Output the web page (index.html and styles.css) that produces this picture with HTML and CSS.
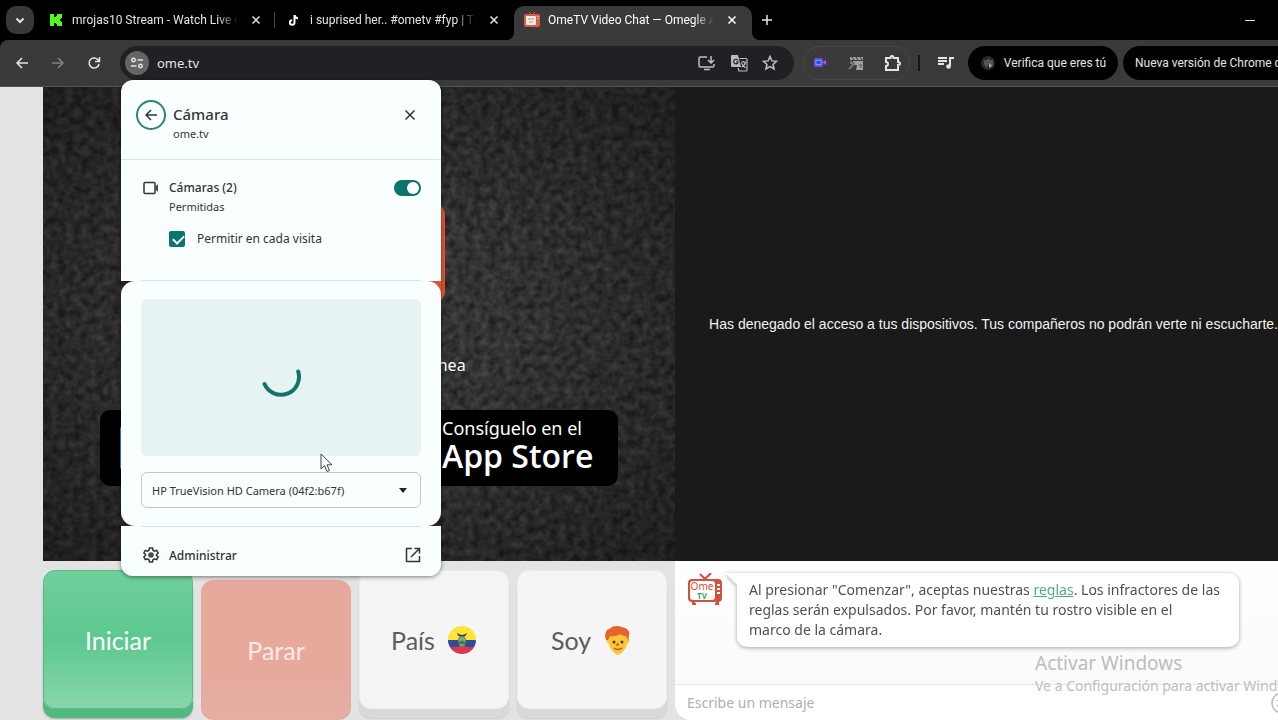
FILE: index.html
```html
<!DOCTYPE html>
<html lang="es">
<head>
    <meta charset="UTF-8">
    <meta name="viewport" content="width=device-width, initial-scale=1.0">
    <title>OmeTV Video Chat — Omegle</title>
    <link rel="stylesheet" href="styles.css">
</head>
<body>
    <header class="browser">
        <div class="tab-strip">
            <button class="tab-search" aria-label="Buscar pestañas">
                <svg width="12" height="12" viewBox="0 0 12 12"><path d="M2.5 4.5 6 8l3.500-3.500" class="line bold"/></svg>
            </button>
            <div class="tab">
                <svg class="favicon" width="14" height="14" viewBox="0 0 14 14"><path fill="#53fc18" d="M1 1h4v3h2V3h1V1h5v4h-1v1h-1v2h1v1h1v4H8v-2H7v-1H5v3H1z"/></svg>
                <span class="tab-title">mrojas10 Stream - Watch Live on Kick</span>
                <button class="tab-close" aria-label="Cerrar"><svg width="10" height="10" viewBox="0 0 10 10"><path d="m1.500 1.500 7 7m0-7-7 7" class="line"/></svg></button>
            </div>
            <div class="tab divided">
                <svg class="favicon" width="14" height="14" viewBox="0 0 14 14"><path d="M7.500 2v7.500a2.300 2.300 0 1 1-2.300-2.300M7.500 2c.3 2 1.500 3 3.500 3.200" fill="none" stroke="#fff" stroke-width="2"/></svg>
                <span class="tab-title">i suprised her.. #ometv #fyp | TikTok</span>
                <button class="tab-close" aria-label="Cerrar"><svg width="10" height="10" viewBox="0 0 10 10"><path d="m1.500 1.500 7 7m0-7-7 7" class="line"/></svg></button>
            </div>
            <div class="tab active">
                <svg class="favicon" width="16" height="16" viewBox="0 0 16 16"><path d="M5 0l3 3 3-3" fill="none" stroke="#dc5a48"/><rect y="2" width="16" height="13" rx="2" fill="#dc5a48"/><rect x="2" y="4" width="10" height="9" rx="1" fill="#f5ece6"/><path d="M4 7h6M5 10h4" stroke="#ba8f72"/><path d="M14 4v4" stroke="#fff" stroke-dasharray="1 1"/></svg>
                <span class="tab-title">OmeTV Video Chat — Omegle Alternative</span>
                <button class="tab-close" aria-label="Cerrar"><svg width="10" height="10" viewBox="0 0 10 10"><path d="m1.500 1.500 7 7m0-7-7 7" class="line"/></svg></button>
            </div>
            <button class="new-tab" aria-label="Nueva pestaña"><svg width="12" height="12" viewBox="0 0 12 12"><path d="M6 1v10M1 6h10" class="line"/></svg></button>
            <button class="minimize" aria-label="Minimizar"><svg width="12" height="12" viewBox="0 0 12 12"><path d="M1 6.500h10" stroke="#ddd"/></svg></button>
        </div>

        <div class="toolbar">
            <nav class="nav-buttons">
                <button aria-label="Atrás"><svg width="14" height="14" viewBox="0 0 14 14"><path d="M13 7H2m5-5L2 7l5 5" class="line"/></svg></button>
                <button aria-label="Adelante" class="disabled"><svg width="14" height="14" viewBox="0 0 14 14"><path d="M1 7h11M7 2l5 5-5 5" class="line"/></svg></button>
                <button aria-label="Recargar"><svg width="14" height="14" viewBox="0 0 14 14"><path d="M12 8a5 5 0 1 1-1.500-4.600L12 5M12.500 1v4.500H8" class="line"/></svg></button>
            </nav>
            <div class="omnibox">
                <button class="site-info" aria-label="Información del sitio">
                    <svg width="14" height="12" viewBox="0 0 14 12"><g class="line"><circle cx="3.500" cy="3" r="1.700"/><path d="M7.500 3H13M1 9h5.500"/><circle cx="10.500" cy="9" r="1.700"/></g></svg>
                </button>
                <input class="address" type="text" value="ome.tv" aria-label="Dirección">
                <button aria-label="Instalar"><svg width="18" height="16" viewBox="0 0 18 16"><path d="M9 2H2.500Q1 2 1 3.500v7Q1 12 2.500 12h12q1.500 0 1.500-1.500V9M6 14.500h6M13 1v7m-3-3 3 3 3-3" class="line dim"/></svg></button>
                <button aria-label="Traducir"><svg width="18" height="18" viewBox="0 0 18 18"><path d="M2 1h6l3 12H2q-1 0-1-1V2q0-1 1-1z" fill="#bbb"/><path d="M8 6.500a2.300 2.300 0 1 0 .2 1.500H6" fill="none" stroke="#222" stroke-width="1.200"/><path d="M9.500 4.500H16q1 0 1 1V16q0 1-1 1H9l-1-3M11 8h5M13.500 7v1m2 0q-1 4-4 5m0-4q1 3 4 5" fill="none" stroke="#bbb" stroke-width="1.200"/></svg></button>
                <button aria-label="Favorito"><svg width="16" height="16" viewBox="0 0 16 16"><path d="m8 1.500 1.900 4.400 4.700.4L11 9.400l1.100 4.600L8 11.600 3.900 14 5 9.400 1.400 6.300l4.700-.4z" class="line dim"/></svg></button>
            </div>
            <div class="extensions">
                <button aria-label="Grabadora"><svg width="16" height="16" viewBox="0 0 16 16"><rect x="2" y="3" width="9" height="9" rx="2" fill="#7548f2"/><rect x="4" y="5.500" width="5" height="4" fill="#3445c8" stroke="#39b3f5"/><path d="m11 7 3-2v5l-3-2" fill="#d742e5"/></svg></button>
                <button aria-label="Video"><svg width="16" height="16" viewBox="0 0 16 16"><path d="M2 2h13v3H2zM5 6h10v9H8l1-5H5z" fill="#a0a0a0"/><path d="m4 2 2 3m2-3 2 3m2-3 2 3" stroke="#3a3a3a"/><path d="m1 14 5-5M3 6v2h4M11 10h2v3" fill="none" stroke="#777" stroke-width="2"/></svg></button>
                <button aria-label="Extensiones"><svg width="18" height="18" viewBox="0 0 18 18"><path d="M2 4h4.500Q6.500 2 8 2t1.500 2H14v4q2 0 2 1.500T14 11v5H2v-4q2 0 2-2T2 8z" class="line bold"/></svg></button>
            </div>
            <span class="toolbar-divider"></span>
            <button class="media" aria-label="Control multimedia"><svg width="16" height="14" viewBox="0 0 16 14"><path d="M0 2h9M0 5h9M0 8h6" class="line bold"/><path d="M12 10V2h4" class="line bold"/><circle cx="10.500" cy="10.500" r="2.300" fill="#e4e4e4"/></svg></button>
            <button class="pill profile">
                <svg width="16" height="16" viewBox="0 0 16 16"><circle cx="8" cy="8" r="7" fill="#292929"/><path d="M4 5h3l1-2 2 2h3v6l-3 1-1-3-3 4-2-4z" fill="#555"/><path d="M9 8l3 3-3 2z" fill="#aaa"/></svg>
                Verifica que eres tú
            </button>
            <button class="pill update">Nueva versión de Chrome disponible</button>
        </div>
    </header>

    <main class="page">
        <section class="remote-video">
            <svg class="static" width="100%" height="100%" aria-hidden="true">
                <filter id="grain" x="0" y="0" width="100%" height="100%" color-interpolation-filters="sRGB">
                    <feTurbulence type="fractalNoise" baseFrequency="0.130" numOctaves="2" seed="4"/>
                    <feColorMatrix values="0.240 0 0 0 0.080  0.240 0 0 0 0.080  0.240 0 0 0 0.080  0 0 0 0 1"/>
                </filter>
                <rect width="100%" height="100%" filter="url(#grain)"/>
            </svg>
            <div class="intro">
                <div class="big-logo"></div>
                <p class="tagline">Video chat aleatorio en línea</p>
                <div class="stores">
                    <a href="#" class="store">
                        <svg width="44" height="50" viewBox="0 0 44 50"><path d="M2 4v42l22-21z" fill="#4285f4"/><path d="m2 4 32 15-10 6z" fill="#34a853"/><path d="m2 46 32-15-10-6z" fill="#ea4335"/><path d="m34 19 9 6-9 6-10-6z" fill="#fbbc04"/></svg>
                    </a>
                    <a href="#" class="store apple">
                        <span class="store-small">Consíguelo en el</span>
                        <span class="store-name">App Store</span>
                    </a>
                </div>
            </div>
        </section>

        <section class="local-video">
            <p>Has denegado el acceso a tus dispositivos. Tus compañeros no podrán verte ni escucharte.</p>
        </section>

        <section class="controls">
            <button class="key start">Iniciar</button>
            <button class="key stop">Parar</button>
            <button class="key">País
                <svg width="30" height="30" viewBox="0 0 30 30">
                    <clipPath id="round"><circle cx="15" cy="15" r="14"/></clipPath>
                    <g clip-path="url(#round)"><path fill="#fce43a" d="M0 0h30v15H0z"/><path fill="#2e4c97" d="M0 15h30v7H0z"/><path fill="#dd3552" d="M0 22h30v8H0z"/></g>
                    <path d="M10 8q3 2 5 2 2 0 5-2-1 4-5 4t-5-4z" fill="#3c3a31"/><ellipse cx="15" cy="16" rx="3.500" ry="4.500" fill="#6aabb0" stroke="#8a7a32"/><path d="M12 17q3-3 6 0v2h-6z" fill="#3d7d55"/><path d="M12 21h6" stroke="#c8a53a"/>
                </svg>
            </button>
            <button class="key">Soy
                <svg width="30" height="30" viewBox="0 0 30 30">
                    <path d="M4 13q-2 3 2 6 1 7 9 11 8-4 9-11 4-3 2-6L23 6H7z" fill="#fcc33b"/>
                    <path d="M3 15Q1 9 4 5q3-1 5-3 5-2 10 0 9 2 7 9l-1 4-2-4q-4 0-6-2-5 3-10 2l-2 4z" fill="#e4642b"/>
                    <circle cx="11" cy="17" r="1.500" fill="#573b24"/><circle cx="19" cy="17" r="1.500" fill="#573b24"/><path d="m15 18-1 2h2M11 23q4 3 8 0" fill="none" stroke="#b65f21" stroke-width="1.500"/>
                </svg>
            </button>
        </section>

        <section class="chat">
            <div class="messages">
                <svg class="avatar" width="36" height="32" viewBox="0 0 36 32">
                    <path d="m13 1 5 5 6-6" fill="none" stroke="#cf513e" stroke-width="2"/><path d="M6 28v3h3M31 28v3h-3" stroke="#cf513e" stroke-width="2"/>
                    <rect x="1" y="6" width="34" height="23" rx="4" fill="#cf513e"/><rect x="3" y="8" width="25" height="19" rx="3" fill="#fff"/>
                    <path d="M30 12h3m-3 4h3m-3 4h3" stroke="#fff" stroke-width="2"/>
                    <text x="15" y="17" class="logo-ome">Ome</text><text x="15" y="26" class="logo-tv">TV</text>
                </svg>
                <p class="bubble">Al presionar "Comenzar", aceptas nuestras <a href="#">reglas</a>. Los infractores de las<br>reglas serán expulsados. Por favor, mantén tu rostro visible en el<br>marco de la cámara.</p>
            </div>
            <form class="composer">
                <input type="text" placeholder="Escribe un mensaje" aria-label="Escribe un mensaje">
                <button type="button" aria-label="Emoji"><svg width="22" height="22" viewBox="0 0 22 22"><circle cx="11" cy="11" r="10" fill="none" stroke="#bbb" stroke-width="1.500"/><path d="M6 8v1m10-1v1M6 13q5 5 10 0" stroke="#bbb" stroke-width="1.500" fill="none"/></svg></button>
            </form>
        </section>
    </main>

    <aside class="watermark">
        <strong>Activar Windows</strong>
        <span>Ve a Configuración para activar Windows.</span>
    </aside>

    <div class="permission" role="dialog" aria-label="Cámara">
        <div class="permission-top">
            <div class="permission-header">
                <button class="back" aria-label="Volver"><svg width="14" height="14" viewBox="0 0 14 14"><path d="M13 7H2m5-5L2 7l5 5" class="line"/></svg></button>
                <div class="heading">
                    <h2>Cámara</h2>
                    <p>ome.tv</p>
                </div>
                <button class="close" aria-label="Cerrar"><svg width="12" height="12" viewBox="0 0 12 12"><path d="m1.500 1.500 9 9m0-9-9 9" class="line"/></svg></button>
            </div>
            <div class="permission-body">
                <div class="setting">
                    <svg width="20" height="16" viewBox="0 0 20 16"><rect x="3" y="2.500" width="11" height="11" rx="1" class="line"/><path d="m14 7 3-3v8l-3-3z" fill="#474c4c"/></svg>
                    <label for="cameras">Cámaras (2)</label>
                    <input type="checkbox" class="switch" id="cameras" checked>
                    <p>Permitidas</p>
                </div>
                <label class="every-visit"><input type="checkbox" class="tick" checked>Permitir en cada visita</label>
            </div>
        </div>
        <div class="preview-panel">
            <div class="preview">
                <svg width="42" height="42" viewBox="0 0 42 42"><path d="M38.200 14.500A18 18 0 0 1 4.500 27" fill="none" stroke="#12736a" stroke-width="4" stroke-linecap="round"/></svg>
            </div>
            <select aria-label="Cámara">
                <option>HP TrueVision HD Camera (04f2:b67f)</option>
            </select>
        </div>
        <a class="manage" href="#">
            <svg width="16" height="16" viewBox="0 0 16 16"><path d="m6.500 1-.5 2.200-1.500.9-2.200-.7L.9 6l1.600 1.500v1L.9 10l1.400 2.600 2.200-.7 1.500.9.500 2.200h3l.5-2.200 1.500-.9 2.200.7 1.400-2.600-1.600-1.500v-1L15.100 6l-1.400-2.600-2.200.7-1.500-.9L9.500 1z" class="line"/><circle cx="8" cy="8" r="2.800" fill="#474c4c"/></svg>
            <span>Administrar</span>
            <svg width="16" height="16" viewBox="0 0 16 16"><path d="M7 1.500H1.500v13h13V9M9.500 1.500h5v5m0-5L6 10" class="line"/></svg>
        </a>
    </div>

    <svg class="cursor" width="14" height="20" viewBox="0 0 14 20" aria-hidden="true"><path d="M1 1v15l3.500-3.300L7 18.500l2.500-1-2.500-5.700h5z" fill="#fff" stroke="#444"/></svg>
</body>
</html>
```
FILE: styles.css
```css
:root {
    --ui-font: "Noto Sans", "Segoe UI", sans-serif;
    --browser-font: Roboto, "Segoe UI", sans-serif;
    --site-font: Lato, "PT Sans", sans-serif;
    --toolbar: #3a3a3a;
    --panel: #f9fffe;
    --panel-line: #c6ece5;
    --teal: #0b746b;
    --ink: #303535;
}

* {
    margin: 0;
    padding: 0;
    box-sizing: border-box;
}

body {
    position: relative;
    display: flex;
    flex-direction: column;
    height: 100vh;
    overflow: hidden;
    background: #e3e3e3;
    font-family: var(--ui-font);
    font-size: 12px;
}

button,
input,
select {
    border: 0;
    background: none;
    font: inherit;
    color: inherit;
    outline: 0;
}

button {
    display: flex;
    align-items: center;
    justify-content: center;
    cursor: pointer;
}

svg {
    display: block;
    flex-shrink: 0;
}

.line {
    fill: none;
    stroke: currentColor;
    stroke-width: 1.5px;
}

.bold {
    stroke-width: 2px;
}

.dim {
    color: #c0c0c0;
}

/* Browser chrome */
.browser {
    background: #000;
    color: #e4e4e4;
    font-family: var(--browser-font);
}

.tab-strip {
    display: flex;
    align-items: center;
    height: 40px;
    padding-left: 6px;
}

.tab-search {
    width: 28px;
    height: 28px;
    margin-right: 4px;
    border-radius: 10px;
    background: #383838;
}

.tab {
    position: relative;
    display: flex;
    align-items: center;
    gap: 8px;
    width: 238px;
    height: 34px;
    align-self: flex-end;
    padding: 0 10px 6px 10px;
}

.favicon {
    width: 16px;
}

.tab-title {
    flex: 1;
    overflow: hidden;
    white-space: nowrap;
    -webkit-mask-image: linear-gradient(to right, #000 88%, transparent);
    mask-image: linear-gradient(to right, #000 88%, transparent);
}

.tab-close {
    width: 20px;
    height: 20px;
}

.divided::before {
    content: "";
    position: absolute;
    left: -2px;
    top: 6px;
    width: 1px;
    height: 16px;
    background: #444;
}

.active {
    border-radius: 10px 10px 0 0;
    background: var(--toolbar);
    color: #fff;
}

.active::before,
.active::after {
    content: "";
    position: absolute;
    bottom: 0;
    width: 8px;
    height: 8px;
}

.active::before {
    right: 100%;
    background: radial-gradient(circle at 0 0, transparent 8px, var(--toolbar) 8px);
}

.active::after {
    left: 100%;
    background: radial-gradient(circle at 100% 0, transparent 8px, var(--toolbar) 8px);
}

.new-tab {
    width: 30px;
    height: 30px;
}

.minimize {
    width: 40px;
    height: 30px;
    margin-left: auto;
    margin-right: 8px;
}

.toolbar {
    display: flex;
    align-items: center;
    height: 47px;
    border-bottom: 1px solid #555;
    border-radius: 8px 0 0 0;
    background: var(--toolbar);
}

.nav-buttons {
    display: flex;
    gap: 8px;
    padding: 0 12px 0 8px;
}

.nav-buttons button {
    width: 28px;
    height: 28px;
}

.disabled {
    color: #828282;
}

.omnibox {
    display: flex;
    flex: 1;
    align-items: center;
    gap: 14px;
    min-width: 0;
    height: 34px;
    padding: 0 16px 0 5px;
    border-radius: 17px;
    background: #202124;
}

.site-info {
    width: 24px;
    height: 24px;
    border-radius: 50%;
    background: #656565;
}

.address {
    flex: 1;
    min-width: 0;
    margin-left: -6px;
    font-family: var(--ui-font);
    font-size: 13px;
}

.extensions {
    display: flex;
    align-items: center;
    gap: 20px;
    height: 34px;
    margin-left: 9px;
    padding: 0 7px 0 8px;
    border: 1px solid #484848;
    border-radius: 17px;
}

.toolbar-divider {
    width: 2px;
    height: 16px;
    margin: 0 18px 0 8px;
    background: #161616;
}

.media {
    margin-right: 14px;
}

.pill {
    gap: 8px;
    height: 34px;
    border-radius: 17px;
    background: #000;
    white-space: nowrap;
}

.profile {
    width: 150px;
}

.update {
    justify-content: flex-start;
    width: 155px;
    margin-left: 5px;
    padding-left: 12px;
    border-radius: 17px 0 0 17px;
    overflow: hidden;
}

/* Site */
.page {
    display: grid;
    flex: 1;
    grid-template-columns: 632fr 603fr;
    grid-template-rows: 1fr 159px;
    min-height: 0;
    padding-left: 43px;
    font-family: var(--site-font);
}

.remote-video {
    display: grid;
    min-width: 0;
    overflow: hidden;
    background: #222;
    color: #fff;
}

.static,
.intro {
    grid-area: 1 / 1;
}

.intro {
    display: flex;
    flex-direction: column;
    align-items: center;
    justify-content: flex-end;
    padding-bottom: 75px;
    background: radial-gradient(ellipse at center, transparent 30%, rgba(0, 0, 0, 0.4));
    font-family: var(--ui-font);
}

.big-logo {
    width: 172px;
    height: 100px;
    margin-bottom: 50px;
    border-radius: 12px;
    background: #df5438;
}

.tagline {
    margin-bottom: 33px;
    font-size: 16px;
    line-height: 24px;
}

.stores {
    display: flex;
    gap: 12px;
}

.store {
    display: flex;
    align-items: center;
    width: 253px;
    height: 76px;
    padding-left: 18px;
    border-radius: 10px;
    background: #000;
    color: #fff;
    text-decoration: none;
}

.apple {
    flex-direction: column;
    align-items: flex-start;
    justify-content: center;
    padding: 0 0 4px 77px;
}

.store-small {
    font-size: 18px;
    line-height: 20px;
}

.store-name {
    font-family: "Open Sans", sans-serif;
    font-size: 32px;
    font-weight: 600;
    line-height: 36px;
    white-space: nowrap;
}

.local-video {
    display: flex;
    align-items: center;
    justify-content: flex-end;
    overflow: hidden;
    background: #1a1a1a;
    color: #f2f2f2;
    font-family: "Liberation Sans", sans-serif;
    font-size: 14px;
    white-space: nowrap;
}

.controls {
    display: grid;
    grid-template-columns: repeat(4, 1fr);
    gap: 8px;
    padding: 9px 8px 0 0;
}

.key {
    gap: 12px;
    margin-bottom: 11px;
    border: 1px solid #ececec;
    border-radius: 12px;
    background: #f5f5f5;
    box-shadow: 0 9px 0 #d9d9d9, 0 10px 2px #ccc;
    color: #5c5c5c;
    font-size: 25px;
}

.start {
    border-color: #56bd87;
    background: linear-gradient(#70cf9d, #5dc88f 50%, #89d6ac);
    box-shadow: 0 9px 0 #50b980, 0 10px 2px #aaa;
    color: #fff;
}

.stop {
    margin: 10px 0 0;
    border-color: #e5a99d;
    background: linear-gradient(#e6a99c 60%, #e5aea2);
    box-shadow: none;
    color: #fbe9e5;
}

.chat {
    display: flex;
    flex-direction: column;
    min-width: 0;
    overflow: hidden;
    border-radius: 0 0 0 16px;
    background: #fff;
    font-family: var(--ui-font);
}

.messages {
    display: flex;
    flex: 1;
    align-items: flex-start;
    gap: 14px;
    padding: 12px;
    background: linear-gradient(#fff, #fafafa);
}

.logo-ome,
.logo-tv {
    fill: #cf513e;
    font-size: 10px;
    text-anchor: middle;
}

.logo-tv {
    fill: #3ba776;
    font-size: 8px;
    font-weight: 700;
}

.bubble {
    position: relative;
    width: 502px;
    padding: 7px 12px;
    border-radius: 0 10px 10px 10px;
    background: #fff;
    filter: drop-shadow(0 1px 2px rgba(0, 0, 0, 0.35));
    color: #505050;
    font-size: 14px;
    line-height: 20px;
    white-space: nowrap;
}

.bubble::before {
    content: "";
    position: absolute;
    top: 0;
    right: 100%;
    border-top: 12px solid #fff;
    border-left: 12px solid transparent;
}

.bubble a {
    color: #4fad80;
}

.composer {
    display: flex;
    align-items: center;
    height: 36px;
    border-top: 1px solid #e7e7e7;
}

.composer input {
    flex: 1;
    min-width: 0;
    padding-left: 12px;
    font-size: 14px;
}

.composer input::placeholder {
    color: #b0b0b0;
}

.composer button {
    margin-right: -15px;
}

.watermark {
    position: absolute;
    right: 0;
    bottom: 24px;
    width: 243px;
    overflow: hidden;
    color: #bdbdbd;
    white-space: nowrap;
    pointer-events: none;
}

.watermark strong,
.watermark span {
    display: block;
    font-size: 14px;
    line-height: 20px;
}

.watermark strong {
    font-size: 19px;
    font-weight: 400;
    line-height: 26px;
}

/* Camera permission popup */
.permission {
    position: absolute;
    left: 121px;
    top: 80px;
    width: 320px;
    border-radius: 12px;
    box-shadow: 0 1px 4px rgba(0, 0, 0, 0.5);
    color: var(--ink);
}

.permission-top {
    border-radius: 12px 12px 0 0;
    background: var(--panel);
}

.permission-header {
    display: flex;
    align-items: flex-start;
    gap: 7px;
    height: 80px;
    padding: 20px 20px 0 15px;
    border-bottom: 1px solid var(--panel-line);
}

.back {
    width: 30px;
    height: 30px;
    border: 2px solid #298579;
    border-radius: 50%;
}

.heading {
    flex: 1;
    padding-top: 4px;
}

.heading h2 {
    font-size: 15px;
    font-weight: 500;
    line-height: 20px;
}

.heading p {
    font-size: 11px;
    line-height: 20px;
}

.close {
    width: 22px;
    height: 30px;
}

.permission-body {
    margin: 0 20px;
    padding: 18px 0 31px;
    border-bottom: 1px solid var(--panel-line);
}

.setting {
    display: grid;
    grid-template-columns: 28px 1fr auto;
    align-items: center;
    line-height: 20px;
    font-weight: 500;
}

.setting p {
    grid-column: 2;
    font-size: 11px;
    font-weight: 400;
    line-height: 18px;
}

.switch,
.tick {
    appearance: none;
    background: var(--teal);
}

.switch {
    width: 27px;
    height: 16px;
    border-radius: 8px;
}

.switch::before {
    content: "";
    display: block;
    width: 12px;
    height: 12px;
    margin: 2px 2px 2px 13px;
    border-radius: 50%;
    background: #fff;
}

.every-visit {
    display: flex;
    align-items: center;
    gap: 12px;
    margin-top: 13px;
    padding-left: 28px;
    line-height: 20px;
}

.tick {
    width: 16px;
    height: 16px;
    border-radius: 2px;
}

.tick::before {
    content: "";
    display: block;
    width: 9px;
    height: 5px;
    margin: 4px 0 0 4px;
    border: solid #fff;
    border-width: 0 0 2px 2px;
    transform: rotate(-45deg);
}

.preview-panel {
    padding: 18px 20px;
    border-radius: 14px;
    background: var(--panel);
}

.preview {
    display: flex;
    align-items: center;
    justify-content: center;
    height: 157px;
    margin-bottom: 16px;
    border-radius: 6px;
    background: #e7f3f3;
}

.preview-panel select {
    appearance: none;
    display: block;
    width: 100%;
    height: 36px;
    padding: 0 30px 0 10px;
    border: 1px solid #bfc9c8;
    border-radius: 6px;
    background: url("data:image/svg+xml,%3Csvg xmlns='http://www.w3.org/2000/svg' width='8' height='5'%3E%3Cpath d='M0 0h8L4 5z' fill='%23222'/%3E%3C/svg%3E") no-repeat right 13px center;
    font-size: 11px;
}

.manage {
    display: flex;
    align-items: center;
    gap: 10px;
    height: 50px;
    padding: 8px 20px 0 22px;
    border-radius: 0 0 12px 12px;
    background: linear-gradient(var(--panel-line), var(--panel-line)) 20px 0 / 280px 1px no-repeat var(--panel);
    color: inherit;
    font-weight: 500;
    text-decoration: none;
}

.manage span {
    flex: 1;
}

.cursor {
    position: absolute;
    left: 320px;
    top: 453px;
}
```
